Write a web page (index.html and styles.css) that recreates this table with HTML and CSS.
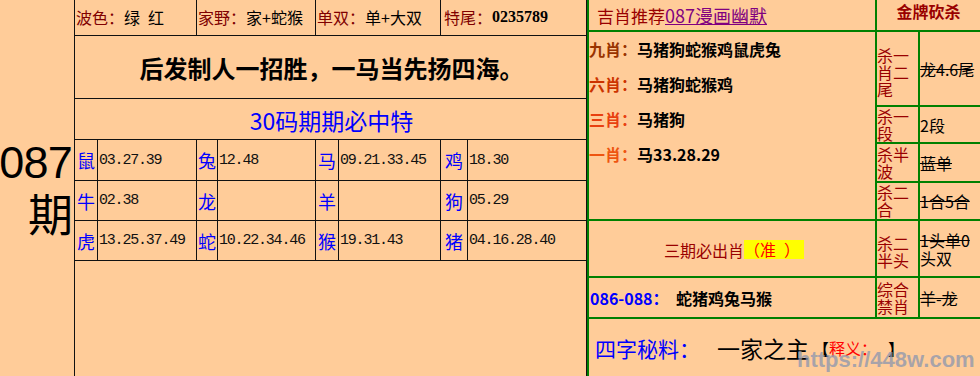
FILE: index.html
```html
<!DOCTYPE html>
<html lang="zh-CN">
<head>
<meta charset="utf-8">
<title>087期</title>
<link rel="stylesheet" href="styles.css">
</head>
<body>
<div class="page">
  <div class="issue">
    <span class="issue-num">087</span>
    <span class="issue-ch">期</span>
  </div>

  <div class="mid">
    <div class="grid">
      <div class="c top span2"><span class="lab">波色：</span>绿&ensp;红</div>
      <div class="c top span2"><span class="lab">家野：</span>家+蛇猴</div>
      <div class="c top span2"><span class="lab">单双：</span>单+大双</div>
      <div class="c top span2 pad2"><span class="lab">特尾：</span><span class="tail">0235789</span></div>

      <div class="c slogan span8">后发制人一招胜，一马当先扬四海。</div>
      <div class="c title span8">30码期期必中特</div>

      <div class="c z">鼠</div><div class="c n">03.27.39</div>
      <div class="c z">兔</div><div class="c n">12.48</div>
      <div class="c z">马</div><div class="c n">09.21.33.45</div>
      <div class="c z">鸡</div><div class="c n">18.30</div>

      <div class="c z">牛</div><div class="c n">02.38</div>
      <div class="c z">龙</div><div class="c n"></div>
      <div class="c z">羊</div><div class="c n"></div>
      <div class="c z">狗</div><div class="c n">05.29</div>

      <div class="c z">虎</div><div class="c n">13.25.37.49</div>
      <div class="c z">蛇</div><div class="c n">10.22.34.46</div>
      <div class="c z">猴</div><div class="c n">19.31.43</div>
      <div class="c z">猪</div><div class="c n">04.16.28.40</div>
    </div>
  </div>

  <div class="right">
    <div class="rgrid">
      <div class="r head"><span class="head-lab">吉肖推荐</span><a class="head-link" href="#">087漫画幽默</a></div>
      <div class="r gold">金牌砍杀</div>

      <div class="r big">
        <div class="pick"><span class="pl l9">九肖：</span><span class="pv">马猪狗蛇猴鸡鼠虎兔</span></div>
        <div class="pick"><span class="pl l6">六肖：</span><span class="pv">马猪狗蛇猴鸡</span></div>
        <div class="pick"><span class="pl l3">三肖：</span><span class="pv">马猪狗</span></div>
        <div class="pick"><span class="pl l1">一肖：</span><span class="pv">马33.28.29</span></div>
      </div>
      <div class="r kl kl-first">杀一肖二尾</div><div class="r kv strike">龙4.6尾</div>
      <div class="r kl">杀一段</div><div class="r kv">2段</div>
      <div class="r kl">杀半波</div><div class="r kv strike">蓝单</div>
      <div class="r kl">杀二合</div><div class="r kv strike">1合5合</div>

      <div class="r three"><span class="three-lab">三期必出肖</span><span class="three-hl">（准&ensp;）</span></div>
      <div class="r kl kl-mid">杀二半头</div><div class="r kv"><span class="strike">1头单0</span>头双</div>

      <div class="r period"><span class="per-lab">086-088：</span><span class="per-val">蛇猪鸡兔马猴</span></div>
      <div class="r kl">综合禁肖</div><div class="r kv strike">羊-龙</div>

      <div class="r secret">
        <span class="sec-lab">四字秘料：</span><span class="sec-val">一家之主</span><span class="sec-br">【<span class="sec-red">释义：</span>&nbsp;&nbsp;&nbsp;】</span>
      </div>
    </div>
    <div class="watermark">https://448w.com</div>
  </div>
</div>
</body>
</html>
```

FILE: styles.css
```css
* { box-sizing: border-box; }

body {
  margin: 0;
  background: #FFCC99;
  font-family: "Noto Sans CJK SC", sans-serif;
  color: #000;
}

.page {
  display: flex;
  width: 980px;
  height: 376px;
  overflow: hidden;
}

/* left issue column */
.issue {
  width: 74px;
  flex: none;
  display: flex;
  flex-direction: column;
  align-items: flex-end;
  justify-content: center;
  padding-right: 1px;
}
.issue-num {
  font-family: "Liberation Sans", Arial, sans-serif;
  font-size: 45px;
  line-height: 48px;
  letter-spacing: -0.8px;
  margin-right: 1px;
}
.issue-ch {
  font-size: 45px;
  line-height: 48px;
  margin-top: 2px;
}

/* middle table */
.mid {
  width: 513px;
  flex: none;
  border-left: 1px solid #111;
  border-right: 1px solid #111;
}
.grid {
  display: grid;
  grid-template-columns: 22px 98px 20px 97px 22px 101px 26px 118px;
  grid-template-rows: 35px 62px 40px 40px 39px 39px;
  gap: 1px;
  padding-bottom: 1px;
  background: #111;
}
.c {
  background: #FFCC99;
  display: flex;
  align-items: center;
  white-space: nowrap;
  overflow: hidden;
}
.span2 { grid-column: span 2; }
.span8 { grid-column: span 8; }

.top {
  font-size: 16px;
  line-height: 20px;
  padding-left: 1px;
  padding-bottom: 1px;
}
.pad2 { padding-left: 3px; }
.lab { color: #800000; }
.tail {
  font-family: "Liberation Serif", serif;
  font-weight: bold;
  font-size: 16px;
}

.slogan {
  justify-content: center;
  font-size: 24px;
  font-weight: bold;
  padding-left: 2px;
}
.title {
  justify-content: center;
  font-size: 23px;
  color: #0000FF;
  padding-left: 2px;
  padding-top: 1px;
}

.z {
  justify-content: center;
  color: #0000FF;
  font-size: 18px;
}
.n {
  font-family: "Liberation Mono", monospace;
  font-size: 15px;
  letter-spacing: -1.2px;
  padding-left: 1px;
  color: #111;
}

/* right panel */
.right {
  flex: 1;
  position: relative;
}
.rgrid {
  display: grid;
  grid-template-columns: 286px 41px 60px;
  grid-template-rows: 30px 73px 35px 37px 36px 55px 39px 57px;
  gap: 2px;
  padding-left: 2px;
  background: #008000;
  height: 376px;
}
.r {
  background: #FFCC99;
  overflow: hidden;
}

.head {
  display: flex;
  align-items: center;
  padding-left: 8px;
  white-space: nowrap;
}
.head-lab {
  color: #990000;
  font-size: 17px;
}
.head-link {
  color: #800080;
  font-size: 18px;
  text-decoration: underline;
}
.gold {
  grid-column: span 2;
  display: flex;
  justify-content: center;
  align-items: flex-start;
  padding-top: 1px;
  color: #990000;
  font-size: 16px;
  font-weight: bold;
  line-height: 20px;
}

.big {
  grid-row: span 4;
}
.pick {
  height: 35px;
  display: flex;
  align-items: center;
  font-size: 16px;
  font-weight: bold;
  white-space: nowrap;
}
.pick:first-child { margin-top: -1px; }
.pl { width: 48px; }
.l9 { color: #993300; }
.l6 { color: #CC3300; }
.l3 { color: #E84010; }
.l1 { color: #EE5511; }
.pv { color: #000; }

.kl {
  color: #990000;
  font-size: 16px;
  line-height: 17px;
  display: flex;
  align-items: center;
}
.kl-first { padding-top: 8px; }
.kl-mid { padding-top: 6px; }
.kv {
  font-size: 16px;
  line-height: 18px;
  display: flex;
  align-items: center;
  flex-wrap: wrap;
  align-content: center;
}
.strike { text-decoration: line-through; }

.three {
  display: flex;
  justify-content: center;
  align-items: center;
  font-size: 16px;
  padding-top: 2px;
  padding-left: 4px;
}
.three-lab { color: #990000; }
.three-hl {
  background: #FFFF00;
  color: #FF0000;
  line-height: 19px;
  padding-right: 4px;
}

.period {
  display: flex;
  align-items: center;
  padding-left: 1px;
  font-size: 16px;
  font-weight: bold;
  white-space: nowrap;
}
.per-lab {
  color: #0000FF;
  width: 86px;
}
.per-val { color: #000; }

.secret {
  grid-column: span 3;
  display: flex;
  align-items: center;
  padding-left: 6px;
  white-space: nowrap;
}
.sec-lab {
  color: #0000FF;
  font-size: 21px;
}
.sec-val {
  color: #000;
  font-size: 23px;
  margin-left: 17px;
}
.sec-br {
  font-size: 16px;
  font-weight: bold;
  margin-left: 4px;
}
.sec-red {
  color: #FF0000;
  font-weight: normal;
}

.watermark {
  position: absolute;
  left: 210px;
  top: 347px;
  font-family: "Liberation Sans", Arial, sans-serif;
  font-weight: bold;
  font-size: 22px;
  color: rgba(140, 150, 175, 0.75);
  white-space: nowrap;
}
```
